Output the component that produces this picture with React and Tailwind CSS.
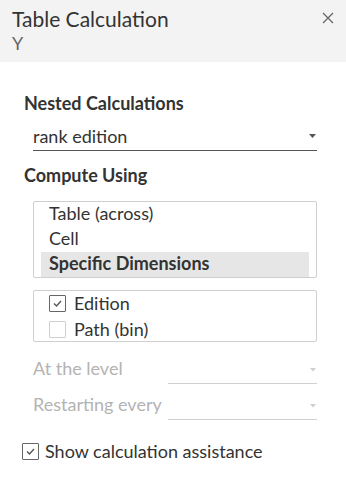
import React from 'react';

const font = { fontFamily: 'Lato, "Open Sans", sans-serif' };

function Caret({ light }) {
  return light ? (
    <svg width="6" height="4" viewBox="0 0 6 4" className="shrink-0">
      <path d="M0 0h6L3 3.5z" fill="#cfcfcf" />
    </svg>
  ) : (
    <svg width="7" height="4" viewBox="0 0 7 4" className="shrink-0">
      <path d="M0 0h7L3.5 4z" fill="#555" />
    </svg>
  );
}

function Check({ checked, dark }) {
  return (
    <div
      className={`w-[17px] h-[17px] shrink-0 border rounded-[1px] flex items-center justify-center ${
        dark ? 'border-[#666]' : 'border-[#cfcfcf]'
      }`}
    >
      {checked && (
        <svg width="11" height="9" viewBox="0 0 11 9">
          <path d="M2 4.5l2.5 2.5L9 2" stroke="#555" strokeWidth="1.4" fill="none" />
        </svg>
      )}
    </div>
  );
}

export default function App() {
  return (
    <div className="w-[346px] h-[493px] bg-white text-[#333] text-[18px] leading-[22px]" style={font}>
      {/* header */}
      <div className="h-[62px] bg-[#f3f3f3] flex justify-between pl-3 pr-3">
        <div className="pt-[6px]">
          <div className="text-[21px] leading-[25px] text-[#333]">Table Calculation</div>
          <div className="mt-[1px] text-[18px] leading-[22px] text-[#666]">Y</div>
        </div>
        <div className="pt-[12px]">
          <svg width="12" height="12" viewBox="0 0 12 12">
            <path d="M1 1l10 10M11 1L1 11" stroke="#666" strokeWidth="1.3" />
          </svg>
        </div>
      </div>

      <div className="px-6 pt-[30px]">
        <div className="font-bold">Nested Calculations</div>

        <div className="ml-[9px] w-[284px] mt-[11px] pb-[3px] border-b border-[#555] flex items-center justify-between">
          <span>rank edition</span>
          <span className="mr-[1px]"><Caret /></span>
        </div>

        <div className="font-bold mt-[13px]">Compute Using</div>

        <div className="ml-[9px] w-[284px] mt-[15px] border border-[#cfcfcf] rounded-[2px] px-[7px]">
          <div className="h-[25px] px-2">Table (across)</div>
          <div className="h-[25px] px-2">Cell</div>
          <div className="h-[25px] px-2 bg-[#e6e6e6] font-bold">Specific Dimensions</div>
        </div>

        <div className="ml-[9px] w-[284px] mt-[12px] border border-[#cfcfcf] rounded-[2px] px-[15px] pt-[1px] pb-[1px] flex flex-col gap-[4px]">
          <div className="flex items-center gap-[8px] h-[22px]">
            <Check checked dark />
            <span>Edition</span>
          </div>
          <div className="flex items-center gap-[8px] h-[22px]">
            <Check />
            <span>Path (bin)</span>
          </div>
        </div>

        <div className="ml-[9px] w-[284px] mt-[15px] text-[#b3b3b3]">
          <div className="flex items-start">
            <span className="w-[135px]">At the level</span>
            <div className="flex-1 h-[27px] border-b border-[#d0d0d0] flex items-center justify-end">
              <span className="mr-[1px]"><Caret light /></span>
            </div>
          </div>
          <div className="flex items-start mt-[9px]">
            <span className="w-[135px]">Restarting every</span>
            <div className="flex-1 h-[27px] border-b border-[#d0d0d0] flex items-center justify-end">
              <span className="mr-[1px]"><Caret light /></span>
            </div>
          </div>
        </div>

        <div className="flex items-center gap-[6px] -ml-[2px] mt-[20px] h-[22px]">
          <Check checked dark />
          <span>Show calculation assistance</span>
        </div>
      </div>
    </div>
  );
}
